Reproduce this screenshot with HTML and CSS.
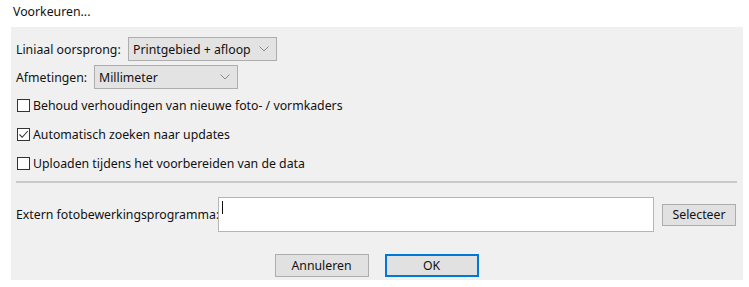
FILE: index.html
```html
<!DOCTYPE html>
<html>
<head>
  <meta charset="UTF-8">
  <title>Voorkeuren</title>
  <link rel="stylesheet" href="styles.css">
</head>
<body>
  <div class="title">Voorkeuren...</div>

  <div class="panel">
    <div class="row">
      <span class="label label-origin">Liniaal oorsprong:</span>
      <div class="combo combo-origin">
        <span>Printgebied + afloop</span>
        <svg class="chevron" width="10" height="6" viewBox="0 0 10 6"><path d="M0.5 0.5 L5 5 L9.5 0.5" fill="none" stroke="#8a8a8a" stroke-width="1"/></svg>
      </div>
    </div>

    <div class="row row-units">
      <span class="label label-units">Afmetingen:</span>
      <div class="combo combo-units">
        <span>Millimeter</span>
        <svg class="chevron" width="10" height="6" viewBox="0 0 10 6"><path d="M0.5 0.5 L5 5 L9.5 0.5" fill="none" stroke="#8a8a8a" stroke-width="1"/></svg>
      </div>
    </div>

    <div class="checks">
      <label class="check">
        <span class="box"></span>
        <span>Behoud verhoudingen van nieuwe foto- / vormkaders</span>
      </label>
      <label class="check">
        <span class="box">
          <svg width="11" height="11" viewBox="0 0 11 11"><path d="M1.5 5.5 L4.2 8.3 L9.8 2" fill="none" stroke="#333" stroke-width="1.1"/></svg>
        </span>
        <span>Automatisch zoeken naar updates</span>
      </label>
      <label class="check">
        <span class="box"></span>
        <span>Uploaden tijdens het voorbereiden van de data</span>
      </label>
    </div>

    <div class="separator"></div>

    <div class="extern">
      <span class="label label-extern">Extern fotobewerkingsprogramma:</span>
      <div class="field"><span class="caret"></span></div>
      <button class="btn btn-select">Selecteer</button>
    </div>

    <div class="actions">
      <button class="btn btn-dialog">Annuleren</button>
      <button class="btn btn-dialog btn-default">OK</button>
    </div>
  </div>
</body>
</html>
```

FILE: styles.css
```css
body {
  margin: 0;
  background-color: white;
  font-family: "Noto Sans", "Open Sans", sans-serif;
  font-size: 12.3px;
  color: #111;
}
.title {
  height: 27px;
  line-height: 24px;
  padding-left: 13px;
}
.panel {
  margin: 0 6px 0 11px;
  height: 253px;
  box-sizing: border-box;
  padding: 10px 6px 0 5px;
  background-color: #f0f0f0;
}
.row {
  display: flex;
  align-items: center;
  height: 24px;
}
.row-units {
  margin-top: 4px;
}
.label {
  white-space: nowrap;
}
.label-origin {
  width: 112px;
}
.label-units {
  width: 78px;
}
.label-extern {
  width: 202px;
}
.combo {
  display: flex;
  align-items: center;
  justify-content: space-between;
  height: 24px;
  box-sizing: border-box;
  padding: 0 4px 0 4px;
  background-color: #e3e3e3;
  border: 1px solid #adadad;
}
.combo-origin {
  width: 149px;
}
.combo-units {
  width: 144px;
}
.chevron {
  margin-right: 3px;
}
.checks {
  margin-top: 6px;
  display: flex;
  flex-direction: column;
  gap: 9px;
}
.check {
  display: flex;
  align-items: center;
  height: 20px;
}
.box {
  width: 13px;
  height: 13px;
  box-sizing: border-box;
  border: 1px solid #333;
  background-color: white;
  margin-left: 1px;
  margin-right: 3px;
  display: flex;
  align-items: center;
  justify-content: center;
}
.separator {
  margin-top: 8px;
  border-top: 2px solid #c9c9c9;
}
.extern {
  margin-top: 14px;
  display: flex;
  align-items: center;
}
.field {
  width: 436px;
  height: 35px;
  box-sizing: border-box;
  border: 1px solid #b5b5b5;
  background-color: white;
  padding: 3px 0 0 3px;
}
.caret {
  display: block;
  width: 1px;
  height: 13px;
  background-color: #111;
}
.btn {
  font-family: inherit;
  font-size: 12.3px;
  color: #111;
  background-color: #e1e1e1;
  border: 1px solid #adadad;
  padding: 0;
}
.btn-select {
  margin-left: 8px;
  width: 74px;
  height: 22px;
}
.actions {
  margin-top: 22px;
  display: flex;
  justify-content: center;
  gap: 16px;
}
.btn-dialog {
  width: 94px;
  height: 23px;
}
.btn-default {
  border: 2px solid #0078d7;
}
```
